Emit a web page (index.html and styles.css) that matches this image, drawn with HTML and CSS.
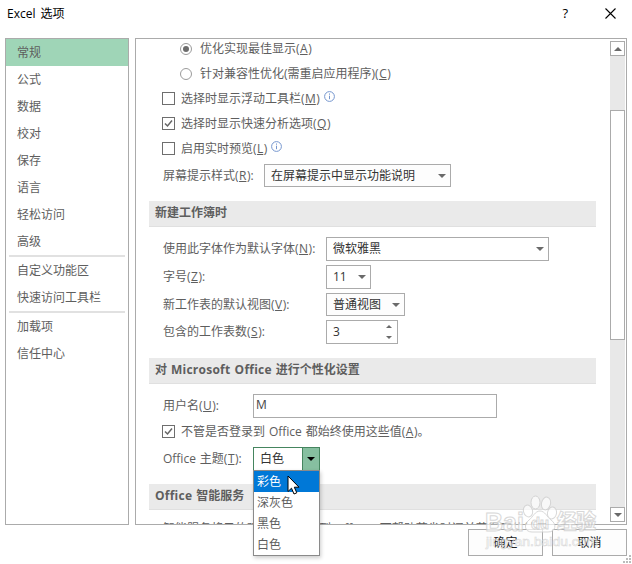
FILE: index.html
```html
<!DOCTYPE html>
<html lang="zh-CN">
<head>
<meta charset="utf-8">
<title>Excel 选项</title>
<link rel="stylesheet" href="styles.css">
</head>
<body>
<div class="dialog">
  <header class="titlebar">
    <span class="title">Excel 选项</span>
    <span class="help">?</span>
    <svg class="close" width="11" height="11" viewBox="0 0 11 11"><path d="M.5 .5L10.500 10.500M10.500 .5L.5 10.500" stroke="#000" stroke-width="1.100" fill="none"/></svg>
  </header>
  <main class="body">
    <nav class="nav">
      <a class="active">常规</a><a>公式</a><a>数据</a><a>校对</a><a>保存</a><a>语言</a><a>轻松访问</a><a>高级</a>
      <hr>
      <a>自定义功能区</a><a>快速访问工具栏</a>
      <hr>
      <a>加载项</a><a>信任中心</a>
    </nav>
    <section class="panel">
      <div class="content">
        <div class="row radio-row first"><i class="radio on"></i><span>优化实现最佳显示(<u>A</u>)</span></div>
        <div class="row radio-row"><i class="radio"></i><span>针对兼容性优化(需重启应用程序)(<u>C</u>)</span></div>
        <div class="row"><i class="check"></i><span>选择时显示浮动工具栏(<u>M</u>)</span><svg class="info" width="11" height="11" viewBox="0 0 11 11"><circle cx="5.500" cy="5.500" r="4.900"/><path d="M5.500 2.500v1.200M5.500 4.700v3.500"/></svg></div>
        <div class="row"><i class="check"><svg width="11" height="11" viewBox="0 0 11 11"><path d="M2 5.500L4.500 8L9 2.500"/></svg></i><span>选择时显示快速分析选项(<u>Q</u>)</span></div>
        <div class="row"><i class="check"></i><span>启用实时预览(<u>L</u>)</span><svg class="info" width="11" height="11" viewBox="0 0 11 11"><circle cx="5.500" cy="5.500" r="4.900"/><path d="M5.500 2.500v1.200M5.500 4.700v3.500"/></svg></div>
        <div class="field tip"><label>屏幕提示样式(<u>R</u>):</label><div class="select">在屏幕提示中显示功能说明<b class="down"></b></div></div>

        <h2 class="h-book">新建工作簿时</h2>
        <div class="book">
          <label>使用此字体作为默认字体(<u>N</u>):</label><div class="select tall font">微软雅黑<b class="down"></b></div>
          <label>字号(<u>Z</u>):</label><div class="select tall size">11<b class="down"></b></div>
          <label>新工作表的默认视图(<u>V</u>):</label><div class="select view">普通视图<b class="down"></b></div>
          <label>包含的工作表数(<u>S</u>):</label><div class="select tall spin">3<span class="spinner"><b class="up"></b><b class="down"></b></span></div>
        </div>

        <h2 class="h-office">对 <span class="latin">Microsoft Office</span> 进行个性化设置</h2>
        <div class="field user"><label>用户名(<u>U</u>):</label><div class="input">M</div></div>
        <div class="row always"><i class="check"><svg width="11" height="11" viewBox="0 0 11 11"><path d="M2 5.500L4.500 8L9 2.500"/></svg></i><span>不管是否登录到 Office 都始终使用这些值(<u>A</u>)。</span></div>
        <div class="field theme"><label>Office 主题(<u>T</u>):</label><div class="combo"><span>白色</span><div class="arrow"><b class="down"></b></div></div></div>

        <h2 class="h-smart"><span class="latin">Office</span> 智能服务</h2>
        <p class="more">智能服务将云的强大功能应用到 Office，可帮助节省时间并获得更佳结果</p>
      </div>
      <div class="scroll"><div class="btn"><b class="up"></b></div><div class="thumb"></div><div class="btn bottom"><b class="down"></b></div></div>
    </section>
  </main>
  <footer class="footer"><button>确定</button><button>取消</button></footer>
  <ul class="menu"><li class="sel">彩色</li><li>深灰色</li><li>黑色</li><li>白色</li></ul>
  <svg class="cursor" width="13" height="20" viewBox="0 0 13 20"><path d="M1 1V16.500L4.500 13.200L7 19L9.800 17.800L7.300 12.200H12Z" fill="#fff" stroke="#000"/></svg>
  <svg class="mark" width="124" height="56" viewBox="0 0 124 56">
    <g fill="#fff" fill-opacity=".85" stroke="#cfcfcf" stroke-width="1">
      <ellipse cx="51.500" cy="7.500" rx="4.500" ry="6.500"/><ellipse cx="62" cy="8.500" rx="4.500" ry="6.500" transform="rotate(12 62 8.500)"/>
      <ellipse cx="44" cy="16" rx="4.500" ry="6" transform="rotate(-15 44 16)"/><ellipse cx="68" cy="18" rx="4.500" ry="6" transform="rotate(10 68 18)"/>
      <path d="M56 16C51 16 49 22 45 25C39 30 41 37 48 37H64C72 37 73 29 67 25C63 22 61 16 56 16Z"/>
      <text class="logo" x="1" y="36" textLength="39" lengthAdjust="spacingAndGlyphs">Bai</text>
      <text class="du" x="47" y="34" textLength="18" lengthAdjust="spacingAndGlyphs">du</text>
      <text class="exp" x="73" y="34" textLength="39" lengthAdjust="spacingAndGlyphs">经验</text>
      <text class="url" x="2" y="51" textLength="112" lengthAdjust="spacingAndGlyphs">jingyan.baidu.com</text>
    </g>
  </svg>
  <svg class="grip" width="8" height="8" viewBox="0 0 8 8"><path d="M6 0h2v2H6zM3 3h2v2H3zM6 3h2v2H6zM0 6h2v2H0zM3 6h2v2H3zM6 6h2v2H6z" fill="#bbb"/></svg>
</div>
</body>
</html>
```
FILE: styles.css
```css
* { box-sizing: border-box; }
body { margin: 0; background: #fff; color: #5e5e5e; font: 12px/16px "Open Sans", "Noto Sans CJK SC", sans-serif; word-spacing: .8px; }
.dialog { position: relative; width: 632px; height: 564px; overflow: hidden; }
.titlebar { height: 38px; padding: 5px 16px 0 7px; display: flex; align-items: flex-start; color: #000; }
.title { flex: 1; line-height: 17px; word-spacing: 2px; }
.help { font-size: 13px; font-weight: 500; line-height: 17px; margin-right: 37px; }
.close { margin-top: 3px; }
.body { display: flex; gap: 6px; height: 487px; padding: 0 5px; }
.nav { width: 124px; border: 1px solid #ababab; }
.nav a { display: block; height: 27px; line-height: 27px; padding-left: 11px; }
.nav .active { background: #9fd5b7; }
.nav hr { margin: 0 3px; height: 2px; border: 0; background: #e1e1e1; }
.panel { width: 492px; border: 1px solid #ababab; display: flex; justify-content: space-between; overflow: hidden; padding-right: 1px; }
.content { width: 460px; padding-left: 13px; flex: none; }
.row { height: 25px; padding-left: 13px; display: flex; align-items: center; white-space: nowrap; }
.first { height: 22px; padding-bottom: 2px; }
.radio-row { padding-left: 31px; }
.row span { margin-left: 6px; }
.radio-row span { margin-left: 8px; }
.radio { width: 12px; height: 12px; border: 1px solid #9b9b9b; border-radius: 50%; display: flex; }
.radio.on::after { content: ""; width: 6px; height: 6px; margin: 2px; border-radius: 50%; background: #6c6c6c; }
.check { width: 13px; height: 13px; border: 1px solid #6e6e6e; display: flex; flex: none; }
.check path { fill: none; stroke: #666; stroke-width: 1.5; }
.info { margin: -4px 0 0 4px; fill: none; stroke: #7596ce; stroke-width: 1; }
u { text-underline-offset: 1px; text-decoration-thickness: 1px; margin: 0 .5px; }
.field { padding-left: 14px; display: flex; align-items: center; }
.tip { margin-top: 3px; }
.tip label { width: 101px; }
.select { position: relative; height: 23px; border: 1px solid #ababab; line-height: 21px; padding-left: 6px; color: #333; width: 187px; background: #fdfdfd; }
.tall { height: 24px; line-height: 22px; background: #fff; }
.down, .up { display: block; width: 0; height: 0; border: 4px solid transparent; border-bottom: 0; border-top-color: #6a6a6a; }
.up { border: 4px solid transparent; border-top: 0; border-bottom-color: #6a6a6a; }
.select > .down { position: absolute; right: 4px; top: 9px; }
h2 { margin: 0; height: 26px; width: 447px; line-height: 24px; padding-left: 6px; font-size: 12px; font-weight: 700; background: #eaeaea; border-bottom: 1px solid #e0e0e0; }
.latin { letter-spacing: .25px; }
.h-book { margin-top: 14px; }
.book { padding: 10px 0 0 14px; display: grid; grid-template-columns: 163px 1fr; row-gap: 4px; align-items: center; white-space: nowrap; }
.select.font { width: 223px; }
.select.size { width: 45px; }
.select.view { width: 79px; }
.select.spin { width: 72px; display: flex; justify-content: space-between; }
.spinner { padding: 4px 5px; display: flex; flex-direction: column; justify-content: space-between; }
.spinner b { border-width: 3px; }
.spinner .up { border-top-width: 0; }
.spinner .down { border-bottom-width: 0; }
.h-office { margin-top: 14px; }
.user { margin-top: 10px; }
.user label, .theme label { width: 90px; }
.input { width: 244px; height: 24px; border: 1px solid #ababab; padding-left: 2px; line-height: 20px; color: #444; }
.always { margin-top: 1px; }
.theme { margin-top: 3px; }
.combo { width: 67px; height: 24px; border: 1px solid #45855f; display: flex; justify-content: space-between; line-height: 22px; padding-left: 6px; color: #333; }
.arrow { width: 17px; border-left: 1px solid #45855f; background: #86bfa0; padding: 9px 0 0 4px; }
.arrow .down { border-top-color: #000; }
.h-smart { margin-top: 13px; }
.more { margin: 11px 0 0 14px; white-space: nowrap; }
.scroll { width: 15px; margin-top: 2px; height: 481px; background: #e8e8e8; display: flex; flex-direction: column; }
.btn { width: 15px; height: 15px; border: 1px solid #ababab; background: #fff; padding: 5px 0 0 3px; flex: none; }
.thumb { margin-top: 54px; height: 230px; border: 1px solid #ababab; background: #fff; }
.bottom { margin-top: auto; }
.footer { display: flex; justify-content: flex-end; gap: 9px; padding: 4px 5px 0 0; }
button { width: 75px; height: 27px; border: 1px solid #ababab; background: #fdfdfd; font: inherit; color: #222; padding: 0; }
.menu { position: absolute; left: 253px; top: 470px; width: 67px; height: 86px; margin: 0; padding: 0; list-style: none; background: #fff; border: 1px solid #8a8a8a; box-shadow: 1px 2px 4px #0003; }
.menu li { height: 21px; line-height: 21px; padding-left: 3px; }
.menu .sel { background: #0078d7; color: #fff; }
.cursor { position: absolute; left: 287px; top: 475px; }
.mark { position: absolute; left: 484px; top: 495px; opacity: .8; }
.logo { font: 900 25px "Liberation Sans", sans-serif; }
.du { font: 700 16px "Liberation Sans", sans-serif; }
.exp { font: 900 20px "Noto Sans CJK SC", sans-serif; }
.url { font: 12px "Liberation Sans", sans-serif; stroke-width: .5px; fill-opacity: .6; }
.grip { position: absolute; right: 1px; bottom: 1px; }
```
